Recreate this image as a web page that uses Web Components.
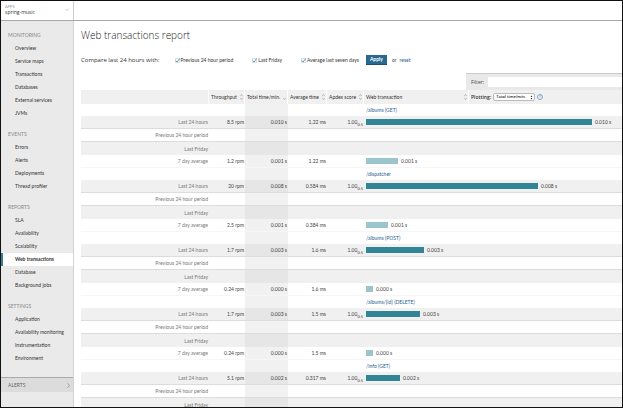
<!DOCTYPE html>
<html lang="en">
<head>
<meta charset="utf-8">
<title>Web transactions report</title>
<style>
html, body { margin: 0; height: 100%; }
body { font: 5px/12px Lato, "Open Sans", sans-serif; color: #444; background: #000; }
</style>
</head>
<body>
<app-shell>
  <app-picker slot="picker" label="APPS" value="spring-music"></app-picker>
  <side-nav slot="nav">
    <nav-group heading="MONITORING" items="Overview|Service maps|Transactions|Databases|External services|JVMs"></nav-group>
    <nav-group heading="EVENTS" items="Errors|Alerts|Deployments|Thread profiler"></nav-group>
    <nav-group heading="REPORTS" items="SLA|Availability|Scalability|Web transactions|Database|Background jobs" current="Web transactions"></nav-group>
    <nav-group heading="SETTINGS" items="Application|Availability monitoring|Instrumentation|Environment"></nav-group>
  </side-nav>
  <compare-bar></compare-bar>
  <filter-bar></filter-bar>
  <transactions-table></transactions-table>
</app-shell>

<script>
const define = (name, html, setup) => customElements.define(name, class extends HTMLElement {
  connectedCallback() {
    if (this.shadowRoot) return;
    const root = this.attachShadow({ mode: 'open' });
    const template = document.createElement('template');
    template.innerHTML = html;
    root.append(template.content.cloneNode(true));
    if (setup) setup(this, root);
  }
});

define('app-shell', `
<style>
:host { display: grid; grid-template: 20px minmax(0, 1fr) / 73px minmax(0, 1fr); height: 100vh; box-sizing: border-box; border: 1px solid #111; background: #fff; overflow: hidden; }
header { grid-column: 1 / 3; display: grid; grid-template-columns: 73px 1fr; border-bottom: 1px solid #a8a8a8; box-sizing: border-box; }
.pick { border-right: 1px solid #ccc; }
main { padding: 6px 0 0 7px; min-width: 0; overflow: hidden; }
h1 { margin: 0 0 10px; font: 300 10px/16px "Open Sans", sans-serif; color: #222; }
</style>
<header><div class="pick"><slot name="picker"></slot></div></header>
<slot name="nav"></slot>
<main><h1>Web transactions report</h1><slot></slot></main>`);

define('app-picker', `
<style>
:host { display: block; }
button { all: unset; box-sizing: border-box; width: 100%; display: flex; align-items: center; justify-content: space-between; padding: 3px 4px; }
.label { display: block; font-size: 4px; line-height: 5px; color: #8a9ba8; }
.value { display: block; font: 5px/6px "Open Sans", sans-serif; color: #333; }
svg { width: 4px; height: 3px; }
</style>
<button type="button"><span><span class="label"></span><span class="value"></span></span>
<svg viewBox="0 0 4 3" fill="none" stroke="#999" stroke-width=".5"><path d="M0 .5 2 2.5 4 .5"/></svg></button>`,
(host, root) => {
  root.querySelector('.label').textContent = host.getAttribute('label');
  root.querySelector('.value').textContent = host.getAttribute('value');
});

define('side-nav', `
<style>
:host { display: block; background: #eaeaea; border-right: 1px solid #d2d2d2; padding-top: 8px; overflow: hidden; }
.alerts { display: flex; align-items: center; justify-content: space-between; height: 14px; padding: 0 3px 0 7px; border-top: 1px solid #aaa; background: #dcdcdc; color: #666; text-decoration: none; margin-top: 12px; }
svg { width: 3px; height: 5px; }
</style>
<nav><slot></slot></nav>
<a class="alerts" href="#alerts">ALERTS<svg viewBox="0 0 3 5" fill="none" stroke="#777" stroke-width=".6"><path d="M.5.3 2.6 2.5.5 4.7"/></svg></a>`);

define('nav-group', `
<style>
:host { display: block; }
:host(:not(:first-child)) { margin-top: 8px; }
h2 { margin: 0; padding-left: 7px; font-size: 5px; line-height: 13px; font-weight: 400; color: #888; }
ul { margin: 0; padding: 0; list-style: none; }
a { display: block; padding-left: 14px; line-height: 13px; color: #333; text-decoration: none; }
a[aria-current] { background: #fff; font-weight: 700; border-left: 2px solid #32828f; padding-left: 12px; }
</style>
<h2></h2><ul></ul>`,
(host, root) => {
  root.querySelector('h2').textContent = host.getAttribute('heading');
  for (const item of host.getAttribute('items').split('|')) {
    const li = document.createElement('li');
    const a = document.createElement('a');
    a.href = '#' + item.toLowerCase().replace(/ /g, '-');
    a.textContent = item;
    if (item === host.getAttribute('current')) a.setAttribute('aria-current', 'page');
    li.append(a);
    root.querySelector('ul').append(li);
  }
});

define('check-option', `
<style>
:host { display: block; }
label { display: flex; align-items: center; gap: 1px; color: #333; white-space: nowrap; }
.box { display: grid; }
.box > * { grid-area: 1 / 1; }
input { appearance: none; margin: 0; width: 5px; height: 5px; box-sizing: border-box; border: 1px solid #d9e0e5; background: #fff; }
svg { width: 5px; height: 5px; pointer-events: none; }
input:not(:checked) + svg { visibility: hidden; }
</style>
<label><span class="box"><input type="checkbox" checked><svg viewBox="0 0 5 5" fill="none" stroke="#3f7fa8" stroke-width=".8"><path d="M.8 2.6 2 4 4.8.4"/></svg></span><slot></slot></label>`);

define('compare-bar', `
<style>
:host { display: flex; align-items: center; height: 14px; white-space: nowrap; }
.lead { font: 6px/12px "Open Sans", sans-serif; color: #333; margin-right: 15px; }
check-option + check-option { margin-left: 19px; }
button { border: 0; border-bottom: 1px solid #1c5276; background: #28698f; color: #fff; font: 700 5px/9px Lato, sans-serif; padding: 0 4px; margin: 0 5px 0 7px; height: 10px; }
a { color: #24628f; text-decoration: none; margin-left: 3px; }
</style>
<span class="lead">Compare last 24 hours with:</span>
<check-option>Previous 24 hour period</check-option>
<check-option>Last Friday</check-option>
<check-option>Average last seven days</check-option>
<button type="button">Apply</button><span>or</span><a href="#reset">reset</a>`);

define('filter-bar', `
<style>
:host { display: flex; align-items: center; width: 156px; height: 17px; box-sizing: border-box; margin: 6px 0 0 auto; padding-left: 5px; background: #e9e9e9; border-top: 1px solid #ccc; }
label { display: flex; flex: 1; align-items: center; gap: 4px; font: 5px/12px "Open Sans", sans-serif; }
input { flex: 1; min-width: 0; height: 10px; border: 0; margin: 0; padding: 0 2px; background: #fff; font: inherit; outline: 0; box-sizing: border-box; }
</style>
<label>Filter: <input type="text"></label>`);

define('sort-icon', `
<style>:host { display: block; flex: none; } svg { display: block; width: 3px; height: 6px; }</style>
<svg viewBox="0 0 3 6" fill="none" stroke="#888" stroke-width=".5"><path class="up" d="M.2 2.2 1.5.5 2.8 2.2"/><path d="M.2 3.8 1.5 5.5 2.8 3.8"/></svg>`,
(host, root) => { if (host.hasAttribute('desc')) root.querySelector('.up').remove(); });

const transactions = [
  ['/albums (GET)', ['8.5 rpm', '0.010 s', '1.22 ms', 226, '0.010 s'], ['1.2 rpm', '0.001 s', '1.22 ms', 32, '0.001 s']],
  ['/dispatcher', ['20 rpm', '0.008 s', '0.584 ms', 172, '0.008 s'], ['2.5 rpm', '0.001 s', '0.384 ms', 22, '0.001 s']],
  ['/albums (POST)', ['1.7 rpm', '0.003 s', '1.6 ms', 58, '0.003 s'], ['0.24 rpm', '0.000 s', '1.6 ms', 7, '0.000 s']],
  ['/albums/{id} (DELETE)', ['1.7 rpm', '0.003 s', '1.5 ms', 54, '0.003 s'], ['0.24 rpm', '0.000 s', '1.5 ms', 7, '0.000 s']],
  ['/info (GET)', ['5.1 rpm', '0.002 s', '0.317 ms', 34, '0.002 s']]
];
const blank = '<td></td><td class="sorted"></td><td></td><td></td><td colspan="2"></td>';
const cells = ([rate, total, avg, size, text], apdex) =>
  `<td>${rate}</td><td class="sorted">${total}</td><td>${avg}</td><td>${apdex}</td>
   <td colspan="2" class="chart"><div style="--size:${size}"><i></i><span>${text}</span></div></td>`;
const group = ([name, now, week]) => `<tbody>
<tr class="name"><th scope="rowgroup"></th><td></td><td class="sorted"></td><td></td><td></td><td colspan="2" class="chart"><a href="#transaction">${name}</a></td></tr>
<tr class="now"><th scope="row">Last 24 hours</th>${cells(now, '1.00<small>0.5</small>')}</tr>
<tr class="line"><th scope="row">Previous 24 hour period</th>${blank}</tr>
<tr class="grey"><th scope="row">Last Friday</th>${blank}</tr>
${week ? `<tr class="week"><th scope="row">7 day average</th>${cells(week, '')}</tr>` : ''}</tbody>`;

define('transactions-table', `
<style>
:host { display: block; }
table { width: 100%; table-layout: fixed; border-spacing: 0; }
th, td { box-sizing: border-box; height: 13px; padding: 0 1px 0 0; text-align: right; font-weight: 400; white-space: nowrap; line-height: 12px; }
tbody th { color: #777; }
thead th { height: 14px; background: #f0f0f0; border-right: 1px solid #fff; color: #333; }
thead th:last-child { border-right: 0; }
thead div { display: flex; align-items: center; justify-content: space-between; padding-left: 2px; }
.name > * { height: 12px; line-height: 11px; }
.now, .grey { background: #f0f0f0; }
.now > *, .line > * { border-bottom: 1px solid #dcdcdc; }
.week > * { border-bottom: 1px solid #f6f6f6; }
.sorted { background: #0000000e; }
.now .sorted, .grey .sorted { background: #0000000a; }
.chart { text-align: left; padding-left: 2px; }
.chart div { display: flex; align-items: center; gap: 3px; }
i { width: calc((100% - 29px) * var(--size) / 226); height: 6px; background: #338494; }
.week i { background: #9cc4cb; }
a { color: #24628f; text-decoration: none; }
small { font-size: 4px; line-height: 4px; vertical-align: sub; color: #533; }
thead .plot { justify-content: flex-start; gap: 2px; font-family: "Open Sans", sans-serif; }
label { font-weight: 600; }
select { appearance: none; grid-area: 1 / 1; width: 42px; height: 8px; margin: 0; padding: 0 2px; border: 1px solid #bbb; border-radius: 2px; background: #fff; color: #222; font: 600 4px/6px "Open Sans", sans-serif; box-sizing: border-box; }
.pick { display: grid; align-items: center; }
.pick svg { grid-area: 1 / 1; justify-self: end; margin-right: 2px; width: 3px; height: 5px; pointer-events: none; }
.help { all: unset; width: 6px; height: 6px; box-sizing: border-box; border: 1px solid #8aa6d0; border-radius: 50%; color: #4672b0; font-size: 4px; line-height: 4px; text-align: center; }
</style>
<table>
<colgroup><col style="width:128px"><col style="width:36px"><col style="width:43px"><col style="width:39px"><col style="width:37px"><col style="width:105px"><col></colgroup>
<thead><tr><th></th>
<th scope="col"><div>Throughput<sort-icon></sort-icon></div></th>
<th scope="col" aria-sort="descending"><div>Total time/min.<sort-icon desc></sort-icon></div></th>
<th scope="col"><div>Average time<sort-icon></sort-icon></div></th>
<th scope="col"><div>Apdex score<sort-icon></sort-icon></div></th>
<th scope="col"><div>Web transaction<sort-icon></sort-icon></div></th>
<th><div class="plot"><label for="plot">Plotting:</label><span class="pick"><select id="plot"><option>Total time/min.</option></select><svg viewBox="0 0 3 5" fill="#333"><path d="M.5 2 1.5.4 2.5 2ZM.5 3 1.5 4.6 2.5 3Z"/></svg></span><button class="help" type="button" aria-label="Help">?</button></div></th>
</tr></thead>
${transactions.map(group).join('')}
</table>`);
</script>
</body>
</html>
